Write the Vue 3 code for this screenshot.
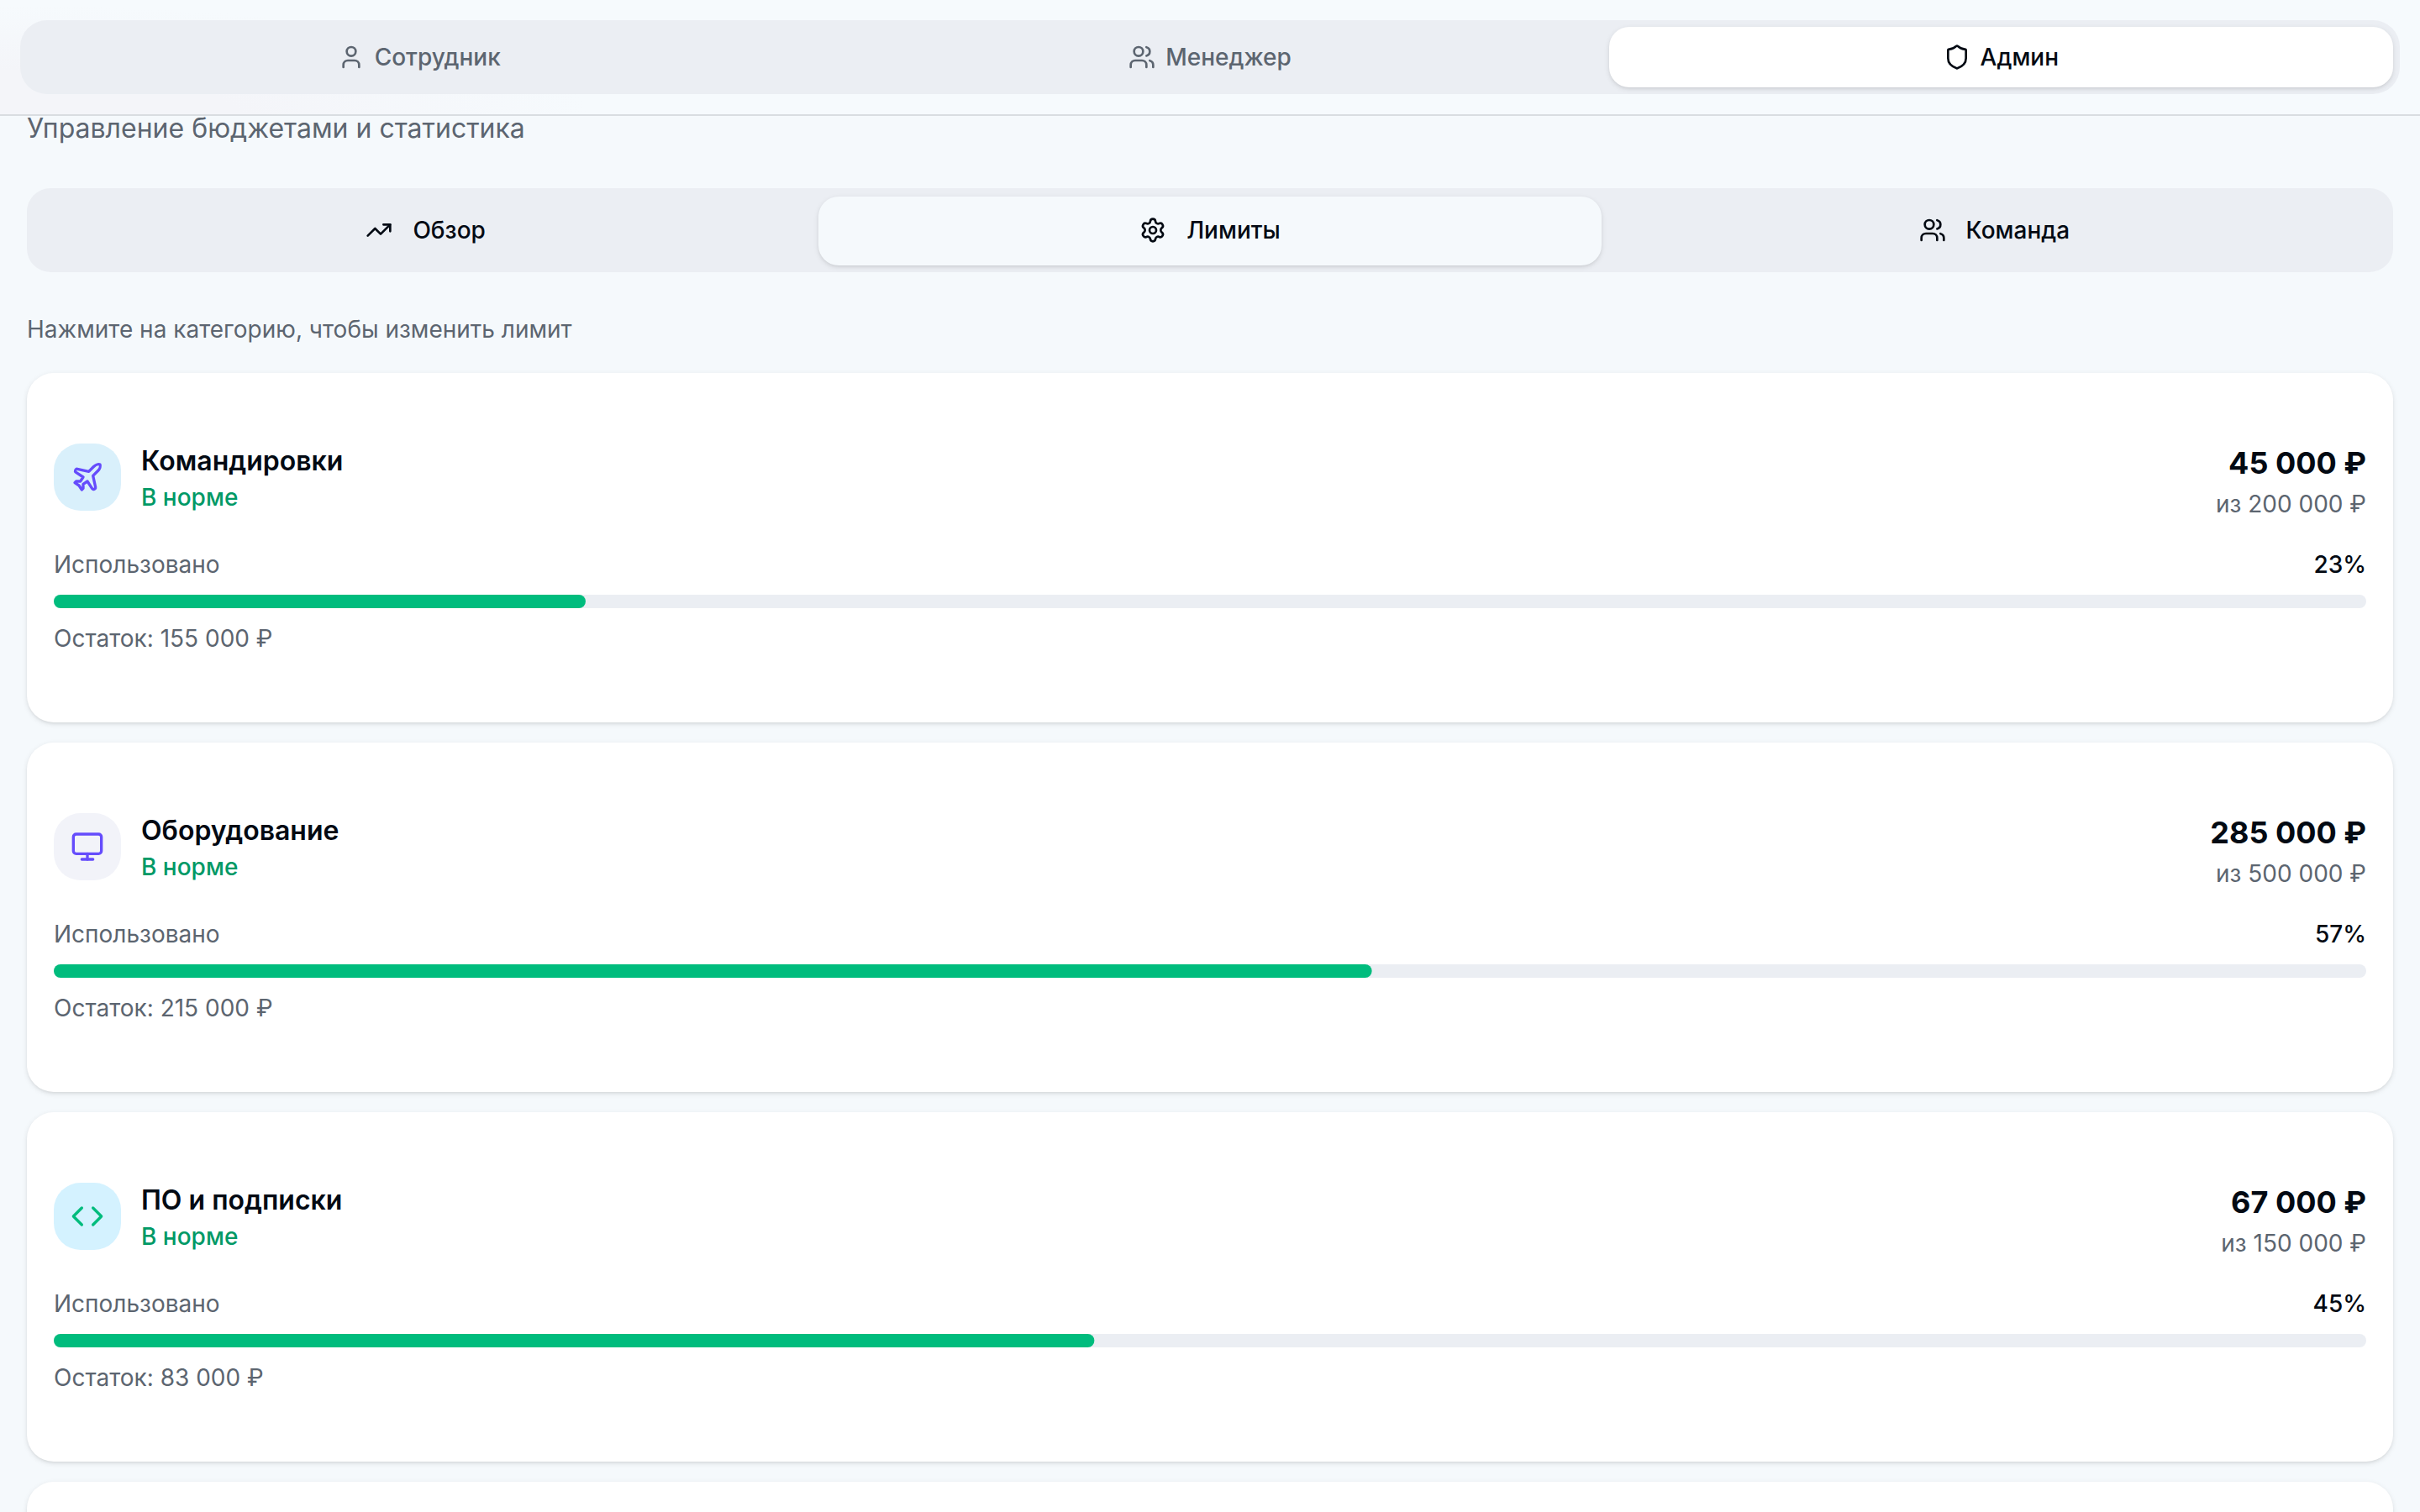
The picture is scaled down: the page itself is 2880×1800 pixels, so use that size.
<script setup>
const roles = [
  { label: 'Сотрудник', icon: 'user' },
  { label: 'Менеджер', icon: 'users' },
  { label: 'Админ', icon: 'shield', active: true },
]

const tabs = [
  { label: 'Обзор', icon: 'trending' },
  { label: 'Лимиты', icon: 'settings', active: true },
  { label: 'Команда', icon: 'users' },
]

const budgets = [
  { name: 'Командировки', icon: 'plane', tone: 'sky', used: '45 000 ₽', limit: '200 000 ₽', left: '155 000 ₽', percent: 23 },
  { name: 'Оборудование', icon: 'monitor', tone: 'violet', used: '285 000 ₽', limit: '500 000 ₽', left: '215 000 ₽', percent: 57 },
  { name: 'ПО и подписки', icon: 'code', tone: 'cyan', used: '67 000 ₽', limit: '150 000 ₽', left: '83 000 ₽', percent: 45 },
]

const icons = {
  user: ['M19 21v-2a4 4 0 0 0-4-4H9a4 4 0 0 0-4 4v2', 'M12 3a4 4 0 1 0 0 8a4 4 0 1 0 0-8z'],
  users: [
    'M16 21v-2a4 4 0 0 0-4-4H6a4 4 0 0 0-4 4v2',
    'M16 3.128a4 4 0 0 1 0 7.744',
    'M22 21v-2a4 4 0 0 0-3-3.87',
    'M9 3a4 4 0 1 0 0 8a4 4 0 1 0 0-8z',
  ],
  shield: [
    'M20 13c0 5-3.5 7.5-7.66 8.95a1 1 0 0 1-.67-.01C7.5 20.5 4 18 4 13V6a1 1 0 0 1 1-1c2 0 4.5-1.2 6.24-2.72a1.17 1.17 0 0 1 1.52 0C14.51 3.81 17 5 19 5a1 1 0 0 1 1 1z',
  ],
  trending: ['M16 7h6v6', 'm22 7-8.5 8.5-5-5L2 17'],
  settings: [
    'M9.671 4.136a2.34 2.34 0 0 1 4.659 0 2.34 2.34 0 0 0 3.319 1.915 2.34 2.34 0 0 1 2.33 4.033 2.34 2.34 0 0 0 0 3.831 2.34 2.34 0 0 1-2.33 4.033 2.34 2.34 0 0 0-3.319 1.915 2.34 2.34 0 0 1-4.659 0 2.34 2.34 0 0 0-3.32-1.915 2.34 2.34 0 0 1-2.33-4.033 2.34 2.34 0 0 0 0-3.831A2.34 2.34 0 0 1 6.35 6.051a2.34 2.34 0 0 0 3.319-1.915',
    'M12 9a3 3 0 1 0 0 6a3 3 0 1 0 0-6z',
  ],
  plane: [
    'M17.8 19.2 16 11l3.5-3.5C21 6 21.5 4 21 3c-1-.5-3 0-4.5 1.5L13 8 4.8 6.2c-.5-.1-.9.1-1.1.5l-.3.5c-.2.5-.1 1 .3 1.3L9 12l-2 3H4l-1 1 3 2 2 3 1-1v-3l3-2 3.5 5.3c.3.4.8.5 1.3.3l.5-.2c.4-.3.6-.7.5-1.2z',
  ],
  monitor: ['M4 3h16a2 2 0 0 1 2 2v10a2 2 0 0 1-2 2H4a2 2 0 0 1-2-2V5a2 2 0 0 1 2-2z', 'M8 21h8', 'M12 17v4'],
  code: ['m16 18 6-6-6-6', 'm8 6-6 6 6 6'],
}
</script>

<template>
  <div class="page">
    <header class="topbar">
      <nav class="roles">
        <button v-for="r in roles" :key="r.label" class="role" :class="{ active: r.active }">
          <svg class="icon" viewBox="0 0 24 24"><path v-for="d in icons[r.icon]" :key="d" :d="d" /></svg>
          <span>{{ r.label }}</span>
        </button>
      </nav>
    </header>

    <main class="content">
      <p class="subtitle">Управление бюджетами и статистика</p>

      <div class="tabs">
        <button v-for="t in tabs" :key="t.label" class="tab" :class="{ active: t.active }">
          <svg class="icon" viewBox="0 0 24 24"><path v-for="d in icons[t.icon]" :key="d" :d="d" /></svg>
          <span>{{ t.label }}</span>
        </button>
      </div>

      <p class="hint">Нажмите на категорию, чтобы изменить лимит</p>

      <div class="cards">
        <section v-for="b in budgets" :key="b.name" class="card">
          <div class="card-head">
            <div class="category">
              <div class="badge" :class="b.tone">
                <svg class="icon" viewBox="0 0 24 24"><path v-for="d in icons[b.icon]" :key="d" :d="d" /></svg>
              </div>
              <div>
                <h3 class="name">{{ b.name }}</h3>
                <p class="status">В норме</p>
              </div>
            </div>
            <div class="amounts">
              <p class="used">{{ b.used }}</p>
              <p class="limit">из {{ b.limit }}</p>
            </div>
          </div>
          <div class="usage">
            <div class="usage-row">
              <span class="muted">Использовано</span>
              <span class="percent">{{ b.percent }}%</span>
            </div>
            <div class="track">
              <div class="fill" :style="{ transform: `translateX(-${100 - b.percent}%)` }"></div>
            </div>
            <p class="muted">Остаток: {{ b.left }}</p>
          </div>
        </section>
        <section class="card"></section>
      </div>
    </main>
  </div>
</template>

<style>
body {
  overflow: hidden;
  background: #f5f9fc;
}
</style>

<style scoped>
.page {
  position: relative;
  height: 1800px;
  overflow: hidden;
  background: #f5f9fc;
  color: #030a13;
  font-family: Inter, "Noto Sans", sans-serif;
  font-size: 28px;
  line-height: 40px;
}
p,
h3 {
  margin: 0;
}
button {
  border: 0;
  padding: 0;
  background: none;
  font: inherit;
  color: inherit;
}
.icon {
  width: 32px;
  height: 32px;
  flex: none;
  fill: none;
  stroke: currentColor;
  stroke-width: 2;
  stroke-linecap: round;
  stroke-linejoin: round;
}

.topbar {
  position: absolute;
  inset: 0 0 auto 0;
  z-index: 1;
  padding: 24px;
  border-bottom: 2px solid #d9dde1;
  background:
    radial-gradient(ellipse 700px 130px at 0 100%, #f4f5f9 40%, rgba(244, 245, 249, 0) 100%),
    #f6fafd;
}
.roles {
  display: grid;
  grid-template-columns: repeat(3, 1fr);
  gap: 8px;
  padding: 8px;
  border-radius: 32px;
  background: #ebeef3;
}
.role {
  display: flex;
  align-items: center;
  justify-content: center;
  gap: 12px;
  height: 72px;
  border-radius: 24px;
  font-weight: 500;
  color: #5c6570;
}
.role.active {
  background: #fff;
  color: #030a13;
  box-shadow: 0 2px 6px rgba(0, 0, 0, 0.1), 0 2px 4px -2px rgba(0, 0, 0, 0.1);
}

.content {
  display: flex;
  flex-direction: column;
  padding: 129px 32px 0;
}
.subtitle {
  font-size: 32px;
  line-height: 48px;
  color: #5c6570;
}
.tabs {
  display: grid;
  grid-template-columns: repeat(3, 1fr);
  align-items: center;
  height: 82px;
  margin-top: 47px;
  padding: 10px 8px 8px;
  border-radius: 28px;
  background: #ebeef3;
}
.tab {
  display: flex;
  align-items: center;
  justify-content: center;
  gap: 24px;
  height: 82px;
  margin: 0 1px;
  padding-bottom: 2px;
  box-sizing: border-box;
  border-radius: 24px;
  font-weight: 500;
}
.tab.active {
  background: #f5f9fc;
  box-shadow: 0 2px 6px rgba(0, 0, 0, 0.1), 0 2px 4px -2px rgba(0, 0, 0, 0.1);
}
.hint {
  margin-top: 48px;
  color: #5c6570;
}
.cards {
  display: flex;
  flex-direction: column;
  gap: 24px;
  margin-top: 32px;
}
.card {
  box-sizing: border-box;
  flex: none;
  height: 416px;
  padding: 80px 32px;
  border-radius: 32px;
  background: #fff;
  box-shadow: 0 2px 6px rgba(0, 0, 0, 0.1), 0 2px 4px -2px rgba(0, 0, 0, 0.1);
}
.card-head {
  display: flex;
  align-items: flex-start;
  justify-content: space-between;
}
.category {
  display: flex;
  align-items: center;
  gap: 24px;
}
.badge {
  display: grid;
  place-items: center;
  width: 80px;
  height: 80px;
  border-radius: 32px;
}
.badge .icon {
  width: 40px;
  height: 40px;
}
.sky {
  background: #d9f0fb;
  color: #654cfc;
}
.violet {
  background: #f2f3f9;
  color: #654cfc;
}
.cyan {
  background: #d4f2ff;
  color: #00bc7d;
}
.name {
  padding-top: 1px;
  font-size: 32px;
  line-height: 47px;
  font-weight: 600;
  padding-top: 1px;
}
.status {
  font-weight: 500;
  color: #009966;
}
.amounts {
  text-align: right;
}
.used {
  padding-bottom: 2px;
  font-size: 36px;
  line-height: 54px;
  font-weight: 700;
}
.limit,
.muted {
  color: #5c6570;
}
.usage {
  display: flex;
  flex-direction: column;
  gap: 16px;
  margin-top: 32px;
}
.usage-row {
  display: flex;
  justify-content: space-between;
}
.percent {
  font-weight: 500;
}
.track {
  height: 16px;
  overflow: hidden;
  border-radius: 8px;
  background: #ebeef3;
}
.fill {
  height: 100%;
  border-radius: 8px;
  background: #00bc7d;
}
</style>
